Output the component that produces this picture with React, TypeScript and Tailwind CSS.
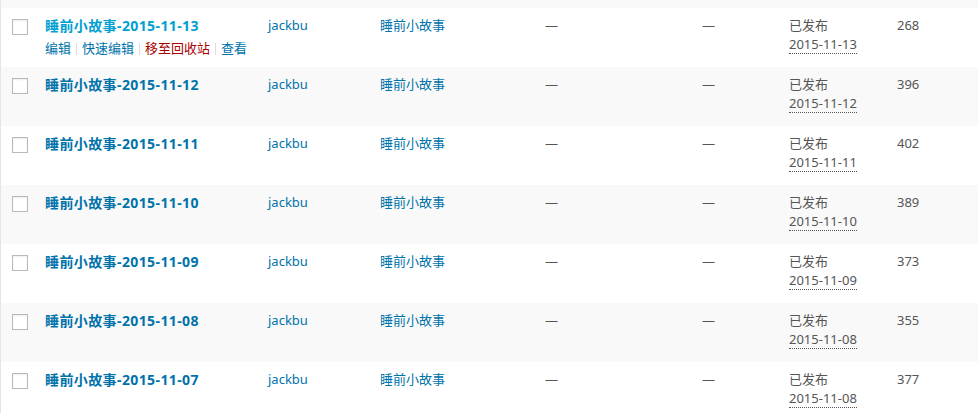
import React from "react";

const rows = [
  { t: "2015-11-13", d: "2015-11-13", n: "268", hover: true },
  { t: "2015-11-12", d: "2015-11-12", n: "396" },
  { t: "2015-11-11", d: "2015-11-11", n: "402" },
  { t: "2015-11-10", d: "2015-11-10", n: "389" },
  { t: "2015-11-09", d: "2015-11-09", n: "373" },
  { t: "2015-11-08", d: "2015-11-08", n: "355" },
  { t: "2015-11-07", d: "2015-11-08", n: "377" },
];

const font = {
  fontFamily: '"Noto Sans", "Noto Sans CJK SC", sans-serif',
};

function Sep() {
  return <span className="inline-block mx-[5px] w-px h-[12px] bg-[#ddd]" />;
}

export default function App() {
  return (
    <div className="w-[978px] h-[413px] overflow-hidden bg-[#f1f1f1]" style={font}>
      <div className="h-[8px] bg-[#f9f9f9] border-l border-[#e5e5e5]" />
      <div className="border-l border-[#e5e5e5]">
        {rows.map((r, i) => (
          <div
            key={i}
            className={`flex h-[59px] text-[13px] leading-[19px] ${i % 2 === 0 ? "bg-white" : "bg-[#f9f9f9]"}`}
          >
            <div className="w-[44px] shrink-0 pl-[11px] pt-[11px]">
              <div className="w-[16px] h-[16px] border border-[#b4b9be] bg-white shadow-[inset_0_1px_2px_rgba(0,0,0,0.07)]" />
            </div>
            <div className="w-[223px] shrink-0 pt-[8px]">
              <div
                className={`text-[14px] font-bold leading-[19px] tracking-[0.4px] ${r.hover ? "text-[#00a0d2]" : "text-[#0073aa]"}`}
              >
                睡前小故事-{r.t}
              </div>
              <div className={`mt-[4px] flex items-center text-[13px] leading-[19px] ${r.hover ? "" : "invisible"}`}>
                <span className="text-[#0073aa]">编辑</span>
                <Sep />
                <span className="text-[#0073aa]">快速编辑</span>
                <Sep />
                <span className="text-[#a00]">移至回收站</span>
                <Sep />
                <span className="text-[#0073aa]">查看</span>
              </div>
            </div>
            <div className="w-[112px] shrink-0 pt-[8px] text-[#0073aa]">jackbu</div>
            <div className="w-[165px] shrink-0 pt-[8px] text-[#0073aa]">睡前小故事</div>
            <div className="w-[157px] shrink-0 pt-[8px] text-[#555]">—</div>
            <div className="w-[87px] shrink-0 pt-[8px] text-[#555]">—</div>
            <div className="w-[108px] shrink-0 pt-[8px] text-[#555]">
              <div>已发布</div>
              <div>
                <span className="border-b border-dotted border-[#555]">{r.d}</span>
              </div>
            </div>
            <div className="flex-1 pt-[8px] text-[#555]">{r.n}</div>
          </div>
        ))}
      </div>
    </div>
  );
}
